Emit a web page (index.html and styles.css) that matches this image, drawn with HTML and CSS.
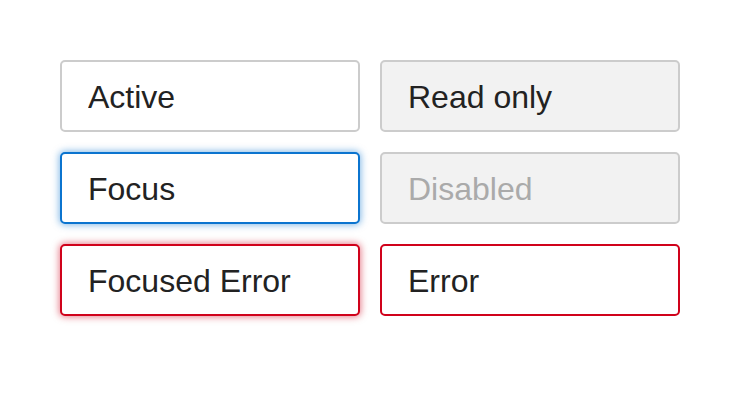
FILE: index.html
```html
<!DOCTYPE html>
<html>
<head>
<meta charset="utf-8">
<link rel="stylesheet" href="styles.css">
</head>
<body>
<div class="grid">
  <input class="field" type="text" value="Active">
  <input class="field readonly" type="text" value="Read only" readonly>
  <input class="field focus" type="text" value="Focus">
  <input class="field disabled" type="text" value="Disabled" disabled>
  <input class="field error focus-error" type="text" value="Focused Error">
  <input class="field error" type="text" value="Error">
</div>
</body>
</html>
```
FILE: styles.css
```css
html, body {
  margin: 0;
  padding: 0;
  background: #ffffff;
}
.grid {
  display: grid;
  grid-template-columns: 300px 300px;
  column-gap: 20px;
  row-gap: 20px;
  padding: 60px;
}
.field {
  box-sizing: border-box;
  width: 300px;
  height: 72px;
  margin: 0;
  padding: 3px 26px 0;
  border: 2px solid #cccccc;
  border-radius: 5px;
  background: #ffffff;
  color: #222222;
  font-family: "Liberation Sans", Arial, sans-serif;
  font-size: 32px;
  outline: none;
}
.readonly {
  background: #f2f2f2;
}
.disabled {
  background: #f2f2f2;
  color: #aaaaaa;
  -webkit-text-fill-color: #aaaaaa;
  opacity: 1;
}
.focus {
  border-color: #0b74cf;
  box-shadow: 0 0 7px 1px rgba(11, 116, 207, 0.5);
}
.error {
  border-color: #d0021b;
}
.focus-error {
  box-shadow: 0 0 7px 1px rgba(208, 2, 27, 0.5);
}
```
